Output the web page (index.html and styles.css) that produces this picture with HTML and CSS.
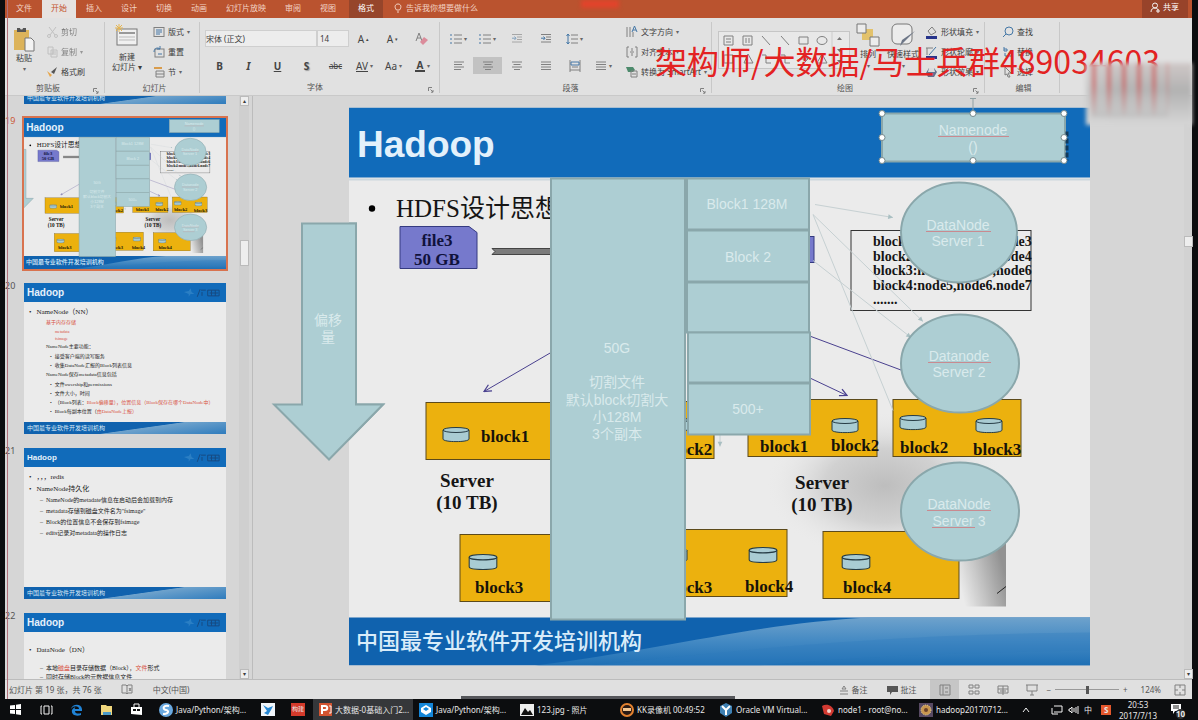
FILE: index.html
```html
<!DOCTYPE html>
<html lang="zh-CN">
<head>
<meta charset="utf-8">
<title>Hadoop - PowerPoint</title>
<link rel="stylesheet" href="styles.css">
</head>
<body>
<svg class="defs" aria-hidden="true">
  <defs>
    <linearGradient id="swoosh" x1="0" y1="0" x2="0" y2="1"><stop offset="0" stop-color="#6ea2cc"/><stop offset=".5" stop-color="#4389c3"/><stop offset="1" stop-color="#1f70b5"/></linearGradient>
    <radialGradient id="shade"><stop offset="0" stop-color="#aaaaaa"/><stop offset=".5" stop-color="#c6c6c6"/><stop offset="1" stop-color="#ebebeb" stop-opacity="0"/></radialGradient>
    <linearGradient id="curl" x1="0" y1="1" x2="1" y2=".6"><stop offset=".1" stop-color="#ebebeb"/><stop offset=".5" stop-color="#c4c4c4"/><stop offset="1" stop-color="#929292"/></linearGradient>
    <marker id="tip" viewBox="0 0 10 10" refX="9" refY="5" markerWidth="9" markerHeight="9" orient="auto"><path d="M1 1L9 5L1 9" fill="none" stroke="#4a418f" stroke-width="1.4"/></marker>
    <marker id="faint" viewBox="0 0 10 10" refX="9" refY="5" markerWidth="6" markerHeight="6" orient="auto"><path d="M1 1L9 5L1 9z" fill="#a9bfc2"/></marker>
  </defs>
  <symbol id="cyl" viewBox="0 0 28 16"><path d="M1 3.5V12.500C1 16 27 16 27 12.500V3.500" class="cyl"/><ellipse cx="14" cy="3.500" rx="13" ry="2.500" class="cyl"/></symbol>
  <symbol id="lines" viewBox="0 0 12 12"><path d="M1 2H11M1 4.500H9M1 7H11M1 9.500H8" class="ink"/></symbol>
  <symbol id="center" viewBox="0 0 12 12"><path d="M1 2H11M2.500 4.500H9.500M1 7H11M3 9.500H9" class="ink"/></symbol>
  <symbol id="just" viewBox="0 0 12 12"><path d="M1 2H11M1 4.500H11M1 7H11M1 9.500H11" class="ink"/></symbol>
  <symbol id="list" viewBox="0 0 12 12"><path d="M4 2H12M4 6H12M4 10H12" class="ink"/><path d="M0 2H2M0 6H2M0 10H2" class="blue"/></symbol>
  <symbol id="indent" viewBox="0 0 12 12"><path d="M1 1.500H11M6 4H11M6 6.500H11M1 9H11" class="ink"/><path d="M1 5.200H5M3.500 3.500L5 5.200L3.500 7" class="blue"/></symbol>
  <symbol id="spacing" viewBox="0 0 12 12"><path d="M5 2H12M5 6H12M5 10H12" class="ink"/><path d="M2 1V11M.5 3L2 1L3.500 3M.5 9L2 11L3.500 9" class="blue"/></symbol>
  <symbol id="launch" viewBox="0 0 6 6"><path d="M.5 4V.5H4M2.500 2.500L5 5M5 3V5.200H3" class="ink"/></symbol>
  <symbol id="box" viewBox="0 0 12 12"><rect x="1" y="1.500" width="10" height="9" class="ink"/><path d="M3 4H9M3 6H9M3 8H7" class="blue"/></symbol>
  <symbol id="logo" viewBox="0 0 40 10"><path d="M1 4L6 3L8 0L9 4L12 6L8 6L6 9L6 6Z" fill="#2b7fc4"/><path d="M15 9L18 1M19 2H24M20 4V8M26 2H38V8H26ZM28 5H37M30 2V8M34 2V8" stroke="#17497f" fill="none"/></symbol>

  <symbol id="slide-art" viewBox="349 107 741 558">
    <rect x="349" y="107" width="741" height="558" fill="#ebebeb"/>
    <rect x="349" y="107" width="741" height="70" fill="#116bba"/>
    <rect x="349" y="178" width="741" height="2" fill="#cdd7de"/>
    <rect x="349" y="617" width="741" height="48" fill="#1062ae"/>
    <path d="M535 665C660 650 760 622 870 617H1090V665Z" fill="url(#swoosh)"/>
    <path d="M590 665C760 648 880 634 1090 632V650C960 652 850 656 760 665Z" fill="#2f7cbd" opacity=".3"/>
    <text x="357" y="156" class="s-title">Hadoop</text>
    <text x="356" y="648" class="s-foot">中国最专业软件开发培训机构</text>
    <circle cx="372" cy="208" r="3.200"/>
    <text x="396" y="216" class="s-bullet">HDFS设计思想</text>

    <ellipse cx="885" cy="485" rx="120" ry="75" fill="url(#shade)" opacity=".7"/>
    <rect x="960" y="535" width="46" height="71" fill="url(#curl)"/>
    <path d="M997 593L1006 586" stroke="#222" stroke-width="1"/>

    <path d="M400 226H469L477 232V268H400Z" fill="#7679cc" stroke="#343a80"/>
    <text x="437" y="245" class="s-bold mid navy">file3</text>
    <text x="437" y="264" class="s-bold mid navy">50 GB</text>
    <path d="M492 248H551V254H492L495 251Z" fill="#7b7b7b" stroke="#444"/>
    <path d="M551 352L484 391" class="vec" marker-end="url(#tip)"/>
    <path d="M811 336L905 371" class="vec"/>
    <path d="M811 378L847 395" class="vec" marker-end="url(#tip)"/>
    <rect x="806" y="236" width="8" height="26" fill="#7679cc" stroke="#343a80"/>

    <g class="store">
      <rect x="426" y="402" width="130" height="57"/>
      <rect x="600" y="401" width="114" height="57"/>
      <rect x="748" y="399" width="129" height="57"/>
      <rect x="893" y="399" width="128" height="57"/>
      <rect x="460" y="534" width="96" height="67"/>
      <rect x="600" y="529" width="187" height="67"/>
      <rect x="823" y="531" width="136" height="67"/>
    </g>
    <use href="#cyl" x="442" y="426" width="28" height="16"/>
    <use href="#cyl" x="661" y="416" width="28" height="16"/>
    <use href="#cyl" x="831" y="417" width="28" height="16"/>
    <use href="#cyl" x="899" y="414" width="28" height="16"/>
    <use href="#cyl" x="975" y="417" width="28" height="16"/>
    <use href="#cyl" x="468" y="553" width="30" height="17"/>
    <use href="#cyl" x="660" y="546" width="28" height="17"/>
    <use href="#cyl" x="748" y="546" width="30" height="17"/>
    <use href="#cyl" x="841" y="553" width="30" height="17"/>
    <g class="s-bold">
      <text x="481" y="441">block1</text><text x="664" y="454">block2</text><text x="760" y="451">block1</text><text x="831" y="450">block2</text>
      <text x="900" y="452">block2</text><text x="973" y="454">block3</text><text x="475" y="592">block3</text><text x="664" y="592">block3</text>
      <text x="745" y="591">block4</text><text x="843" y="592">block4</text>
    </g>
    <g class="s-server">
      <text x="467" y="486">Server</text><text x="467" y="508">(10 TB)</text>
      <text x="822" y="488">Server</text><text x="822" y="510">(10 TB)</text>
    </g>
    <rect x="851" y="230" width="180" height="80" fill="none" stroke="#333"/>
    <g class="s-map">
      <text x="873" y="245">block1:node1,node2,node3</text><text x="873" y="260">block2:node2,node3,node4</text>
      <text x="873" y="274">block3:node4,node5,node6</text><text x="873" y="289">block4:node5,node6.node7</text><text x="873" y="303">.......</text>
    </g>
    <g class="wire">
      <path d="M815 204L893 217" marker-end="url(#faint)"/><path d="M813 214L923 321" marker-end="url(#faint)"/>
      <path d="M813 260L911 337" marker-end="url(#faint)"/><path d="M813 214L893 410"/><path d="M720 434V446" marker-end="url(#faint)"/>
    </g>
    <g class="teal">
      <rect x="551" y="178" width="134" height="441"/>
      <rect x="687" y="178" width="122" height="51"/><rect x="687" y="230" width="122" height="51"/>
      <rect x="687" y="282" width="122" height="50"/><rect x="688" y="332" width="122" height="50"/><rect x="688" y="383" width="122" height="51"/>
      <ellipse cx="959" cy="232" rx="58" ry="50"/><ellipse cx="960" cy="363" rx="59" ry="49"/><ellipse cx="960" cy="511" rx="59" ry="49"/>
      <path d="M302 223H356V404H383L329 459L274 404H302Z"/>
      <rect x="882" y="113" width="183" height="48"/>
    </g>
    <g class="s-label">
      <text x="617" y="352">50G</text><text x="617" y="386">切割文件</text><text x="617" y="404">默认block切割大</text><text x="617" y="421">小128M</text><text x="617" y="438">3个副本</text>
      <text x="747" y="208">Block1 128M</text><text x="748" y="261">Block 2</text><text x="748" y="413">500+</text>
      <text x="958" y="229">DataNode</text><text x="958" y="245">Server 1</text>
      <text x="959" y="360">Datanode</text><text x="959" y="376">Server 2</text>
      <text x="959" y="508">DataNode</text><text x="959" y="525">Server 3</text>
      <text x="973" y="134">Namenode</text><text x="973" y="151">()</text>
    </g>
    <path d="M926 231H991M928 362H991M927 510H991M932 527H975M938 136H1009" stroke="#c98a90"/>
  </symbol>
</svg>

<div class="app">
  <nav class="tabs" aria-label="功能区">
    <button class="tab">文件</button><button class="tab active">开始</button><button class="tab">插入</button><button class="tab">设计</button><button class="tab">切换</button><button class="tab">动画</button><button class="tab">幻灯片放映</button><button class="tab">审阅</button><button class="tab">视图</button><button class="tab context">格式</button>
    <button class="tell"><svg width="8" height="10" viewBox="0 0 8 10"><path d="M2.500 7C0 4 1 1 4 1S8 4 5.500 7ZM3 9H5" fill="none" stroke="#f3d3c5"/></svg>告诉我你想要做什么</button>
    <span class="glow"></span>
    <button class="share"><svg width="11" height="11" viewBox="0 0 11 11"><circle cx="5" cy="3.500" r="2.500" class="white"/><path d="M1 10C1 7 3 6 5 6S8 7 8 8M6 9H10M8 7V11" class="white"/></svg>共享</button>
  </nav>

  <div class="ribbon">
    <section class="group g-clip">
      <div class="body">
        <button class="big"><svg width="22" height="26" viewBox="0 0 22 26"><rect x="1" y="4" width="15" height="20" fill="#dcb35a"/><path d="M4 6V2H13V6Z" fill="#555"/><circle cx="8.500" cy="2" r="1.500" fill="#e1e1e1"/><path d="M12 12H18L21 15V25H12Z" fill="#f3f3f3" stroke="#777"/></svg><span>粘贴</span><i>▾</i></button>
        <div class="col">
          <button class="off"><svg width="11" height="12" viewBox="0 0 11 12"><path d="M2 1L8 9M9 1L3 9" class="gray"/><circle cx="2" cy="10" r="1.500" class="gray"/><circle cx="9" cy="10" r="1.500" class="gray"/></svg>剪切</button>
          <button class="off"><svg width="11" height="12" viewBox="0 0 11 12"><path d="M1 1H6V8H1ZM4 4H10V11H4ZM5 6H9M5 8H9" class="gray"/></svg>复制<i>▾</i></button>
          <button><svg width="11" height="12" viewBox="0 0 11 12"><path d="M0 5L5 9L3 11Z" fill="#e8a64a"/><path d="M4 6L10 1L7 8Z" fill="#555"/></svg>格式刷</button>
        </div>
      </div>
      <footer>剪贴板<svg class="launch"><use href="#launch"/></svg></footer>
    </section>
    <section class="group g-slides">
      <div class="body">
        <button class="big"><svg width="26" height="26" viewBox="0 0 26 26"><rect x="3" y="6" width="20" height="16" fill="#f0f0f0" stroke="#777"/><path d="M5 10H21" stroke="#999" stroke-width="2"/><path d="M5 14H21M5 17H21" stroke="#bbb"/><path d="M5 1V9M1 5H9M2 2L8 8M8 2L2 8" stroke="#e5b550"/></svg><span>新建<br>幻灯片 ▾</span></button>
        <div class="col">
          <button><svg width="12" height="12"><use href="#box"/></svg>版式<i>▾</i></button>
          <button><svg width="12" height="12" viewBox="0 0 12 12"><rect x="2" y="3" width="9" height="8" class="ink"/><path d="M1 6C1 2 5 1 7 3M7 0V3H4M5 8H9" class="blue"/></svg>重置</button>
          <button><svg width="12" height="12" viewBox="0 0 12 12"><path d="M1 2H9" stroke="#d99c4c" stroke-width="2"/><path d="M3 5H11V11H3ZM3 8H11" class="ink"/></svg>节<i>▾</i></button>
        </div>
      </div>
      <footer>幻灯片</footer>
    </section>
    <section class="group g-font">
      <div class="body stack">
        <div class="row fonts">
          <input class="face" aria-label="字体" value="宋体 (正文)"><input class="size" aria-label="字号" value="14">
          <button class="tool big-a">A<sup>▴</sup></button><button class="tool big-a">A<sup>▾</sup></button><button class="tool"><svg width="14" height="14" viewBox="0 0 14 14"><path d="M1 9L4 1L7 9M2 6H6" class="ink"/><path d="M5 10L9 5L13 8L8 13Z" fill="#db8c9b"/></svg></button>
        </div>
        <div class="row">
          <button class="tool"><b>B</b></button><button class="tool"><b><em>I</em></b></button><button class="tool"><b><u>U</u></b></button><button class="tool shadow"><b>S</b></button><button class="tool"><s>abc</s></button><button class="tool"><u>AV</u><i>▾</i></button><button class="tool">Aa<i>▾</i></button><button class="tool"><b class="bar">A</b><i>▾</i></button>
        </div>
      </div>
      <footer>字体<svg class="launch"><use href="#launch"/></svg></footer>
    </section>
    <section class="group g-para">
      <div class="body">
        <div class="stack">
          <div class="row"><button class="tool"><svg width="12" height="12"><use href="#list"/></svg><i>▾</i></button><button class="tool"><svg width="12" height="12"><use href="#list"/></svg><i>▾</i></button><button class="tool off"><svg width="12" height="12"><use href="#indent"/></svg></button><button class="tool"><svg width="12" height="12"><use href="#indent"/></svg></button><button class="tool"><svg width="12" height="12"><use href="#spacing"/></svg><i>▾</i></button></div>
          <div class="row"><button class="tool"><svg width="12" height="12"><use href="#lines"/></svg></button><button class="tool on"><svg width="12" height="12"><use href="#center"/></svg></button><button class="tool"><svg width="12" height="12"><use href="#center"/></svg></button><button class="tool"><svg width="12" height="12"><use href="#just"/></svg></button><button class="tool"><svg width="12" height="12" viewBox="0 0 12 12"><path d="M1 0V12M11 0V12M1 10H11M3 7H9" class="ink"/><path d="M2 2H10V5H2Z" class="blue"/></svg></button><button class="tool"><svg width="12" height="12"><use href="#just"/></svg><i>▾</i></button></div>
        </div>
        <div class="col">
          <button><svg width="12" height="12" viewBox="0 0 12 12"><path d="M1 1V11M4 1V11M7 6V11" class="ink"/><path d="M6 6L8.500 0L11 6M7 4H10" class="blue"/></svg>文字方向<i>▾</i></button>
          <button><svg width="12" height="12" viewBox="0 0 12 12"><path d="M3 1H1V11H3M9 1H11V11H9M6 2V5M6 7V10M4 6H8" class="ink"/></svg>对齐文本<i>▾</i></button>
          <button><svg width="12" height="12" viewBox="0 0 12 12"><path d="M0 1H7L9 4L7 6H2Z" fill="#4d8a6c"/><path d="M5 5H11V11H5ZM6 8H10" class="ink"/></svg>转换为 SmartArt<i>▾</i></button>
        </div>
      </div>
      <footer>段落<svg class="launch"><use href="#launch"/></svg></footer>
    </section>
    <section class="group g-draw">
      <div class="body">
        <div class="gallery">
          <svg viewBox="0 0 128 36" width="128" height="36"><path d="M5 4H14V13H5ZM7 7H12M7 10H12M24 4H33V13H24ZM27 6V11M30 6V11M43 4L51 13M62 4L70 13M80 5H89V12H80ZM5 23H14V31H5ZM25 31L29 22L34 31ZM43 23H47V31H52M62 23H66V31H71M80 27H89M86 24L89 27L86 30" class="ink"/><ellipse cx="103" cy="8.500" rx="5" ry="4" class="ink"/><path d="M98 31L103 22L108 31Z" class="ink"/><path d="M113 0V36" stroke="#ccc"/><path d="M118 8H123L120.500 5ZM118 17H123L120.500 20ZM118 28H123L120.500 31Z" fill="#777"/></svg>
        </div>
        <button class="big"><svg width="24" height="24" viewBox="0 0 24 24"><path d="M6 6H17V17H6Z" fill="#e3c26c"/><path d="M1 1H10V10H1ZM14 14H23V23H14Z" fill="#ececec" stroke="#777"/></svg><span>排列</span><i>▾</i></button>
        <button class="big"><svg width="26" height="24" viewBox="0 0 26 24"><rect x="2" y="1" width="20" height="20" rx="5" fill="#ececec" stroke="#777"/><path d="M25 8L15 18L10 23L12 17Z" fill="#6d7687"/></svg><span>快速样式</span><i>▾</i></button>
        <div class="col">
          <button><svg width="13" height="13" viewBox="0 0 13 13"><path d="M3 5L7 1L11 6L6 9Z" class="ink"/><path d="M1 10H12V13H1Z" fill="#27348b"/></svg>形状填充<i>▾</i></button>
          <button><svg width="13" height="13" viewBox="0 0 13 13"><path d="M1 2H8M2 2V9" class="ink"/><path d="M4 9L11 1" class="blue"/><path d="M1 10H12V13H1Z" fill="#27348b"/></svg>形状轮廓<i>▾</i></button>
          <button><svg width="13" height="13" viewBox="0 0 13 13"><path d="M4 2H9L12 6L9 11H3L1 7Z" fill="#62708c"/><path d="M4 2H9L10 6H3Z" fill="#ddd"/></svg>形状效果<i>▾</i></button>
        </div>
      </div>
      <footer>绘图<svg class="launch"><use href="#launch"/></svg></footer>
    </section>
    <section class="group g-edit">
      <div class="body">
        <div class="col">
          <button><svg width="12" height="12" viewBox="0 0 12 12"><circle cx="7" cy="5" r="4" class="blue"/><path d="M4 8L1 11" class="blue"/></svg>查找</button>
          <button><svg width="12" height="12" viewBox="0 0 12 12"><path d="M2 1V5H5V3H2M7 7H10V10H7ZM3 7V10H5" class="blue"/></svg>替换</button>
          <button><svg width="12" height="12" viewBox="0 0 12 12"><path d="M3 1L9 7H6L8 11L6 11L5 8L3 9Z" class="ink"/></svg>选择</button>
        </div>
      </div>
      <footer>编辑</footer>
    </section>
  </div>

  <main class="work">
    <aside class="panel">
      <ol class="thumbs">
        <li class="peek"><span class="num"></span><div class="thumb"><div class="t-foot">中国最专业软件开发培训机构</div></div></li>
        <li class="current"><span class="num">19</span><div class="thumb"><svg class="art" preserveAspectRatio="none" viewBox="0 0 741 558"><use href="#slide-art" width="741" height="558"/></svg></div></li>
        <li><span class="num">20</span><div class="thumb"><div class="t-head">Hadoop<svg class="logo"><use href="#logo"/></svg></div>
          <div class="t-body"><p class="l1">NameNode（NN）</p><p class="l2 red">基于内存存储</p><p class="l3 red tiny">metadata</p><p class="l3 red tiny">fsimage</p><p class="l2">NameNode主要功能：</p><p class="l3">接受客户端的读写服务</p><p class="l3">收集DataNode汇报的Block列表信息</p><p class="l2">NameNode保存metadata信息包括</p><p class="l3">文件owership和permissions</p><p class="l3">文件大小，时间</p><p class="l3">（Block列表：<span class="red">Block偏移量），位置信息（Block保存在哪个DataNode中）</span></p><p class="l3">Block每副本位置（<span class="red">由DataNode上报）</span></p></div>
          <div class="t-foot">中国最专业软件开发培训机构</div></div></li>
        <li><span class="num">21</span><div class="thumb"><div class="t-head small">Hadoop<svg class="logo"><use href="#logo"/></svg></div>
          <div class="t-body roomy"><p class="l1">，，，redis</p><p class="l1">NameNode持久化</p><p class="dash">NameNode的metadate信息在启动后会加载到内存</p><p class="dash">metadata存储到磁盘文件名为"fsimage"</p><p class="dash">Block的位置信息不会保存到fsimage</p><p class="dash">edits记录对metadata的操作日志</p></div>
          <div class="t-foot">中国最专业软件开发培训机构</div></div></li>
        <li><span class="num">22</span><div class="thumb"><div class="t-head">Hadoop<svg class="logo"><use href="#logo"/></svg></div>
          <div class="t-body late"><p class="l1">DataNode（DN）</p><p class="dash first">本地<span class="red">磁盘</span>目录存储数据（Block），<span class="red">文件</span>形式</p><p class="dash">同时存储Block的元数据信息文件</p></div></div></li>
      </ol>
      <div class="scroll"><span>▴</span><span class="grip"></span><span>▾</span></div>
    </aside>
    <div class="stage">
      <svg class="canvas" viewBox="253 96 931 582" role="img" aria-label="Hadoop 幻灯片">
        <use href="#slide-art" x="349" y="107" width="741" height="558"/>
        <path d="M302 223H356V404H383L329 459L274 404H302Z" class="teal"/>
        <g class="s-label"><text x="328" y="324">偏移</text><text x="328" y="341">量</text></g>
        <path d="M1067 131V160" stroke="#123a5c" stroke-width="3" stroke-dasharray="5 2"/>
        <path d="M973 98V113M970 98H976" stroke="#8fa0a4"/>
        <g class="handles"><circle cx="882" cy="113" r="3"/><circle cx="973" cy="113" r="3"/><circle cx="1064" cy="113" r="3"/><circle cx="882" cy="137" r="3"/><circle cx="1064" cy="137" r="3"/><circle cx="882" cy="160" r="3"/><circle cx="973" cy="160" r="3"/><circle cx="1064" cy="160" r="3"/></g>
      </svg>
    </div>
    <div class="scroll slim"><span></span><span class="grip"></span><span>▾</span></div>
  </main>

  <div class="status">
    <span>幻灯片 第 19 张，共 76 张</span>
    <svg width="13" height="11" viewBox="0 0 13 11"><path d="M1 1H5L6 2V10L5 9H1ZM6 2L7 1H11V9H7L6 10M8 4L10 7M10 4L8 7" class="ink"/></svg>
    <span>中文(中国)</span>
    <div class="right">
      <button><svg width="10" height="10" viewBox="0 0 10 10"><path d="M1 6H9M1 9H9M3 4L5 1L7 4Z" class="ink"/></svg>备注</button>
      <button class="notes"><svg width="11" height="10" viewBox="0 0 11 10"><path d="M0 1H11V7H5L3 10V7H0Z" fill="#555"/></svg>批注</button>
      <button class="view on"><svg width="12" height="12" viewBox="0 0 12 12"><path d="M1 1H11V11H1ZM4 1V11M6 4H9M6 8H9" class="ink"/></svg></button>
      <button class="view"><svg width="12" height="12" viewBox="0 0 12 12"><path d="M1 1H5V4H1ZM7 1H11V4H7ZM1 7H5V10H1ZM7 7H11V10H7Z" class="ink"/></svg></button>
      <button class="view"><svg width="12" height="12" viewBox="0 0 12 12"><path d="M1 2H11V9H1ZM6 2V11M1 5H11M3 7H9" class="ink"/></svg></button>
      <button class="view"><svg width="12" height="12" viewBox="0 0 12 12"><path d="M0 1H12M1 1V7H11V1M6 7V11M4 11H8" class="ink"/></svg></button>
      <span>−</span><input type="range" aria-label="缩放" min="0" max="100" value="50"><span>+</span>
      <span class="pct">124%</span>
      <svg width="12" height="12" viewBox="0 0 12 12"><path d="M1 1H11V11H1ZM6 1V4M6 8V11M1 6H4M8 6H11" class="ink"/></svg>
    </div>
  </div>
  <div class="watermark">架构师/大数据/马士兵群489034603</div>
  <div class="smear"></div>
  <div class="strip"></div>
</div>

<div class="taskbar">
  <button class="ic"><svg width="11" height="11" viewBox="0 0 11 11"><path d="M0 1.500L5 1V5H0ZM6 .8L11 0V5H6ZM0 6H5V10L0 9.500ZM6 6H11V11L6 10.200Z" fill="#fff"/></svg></button>
  <button class="ic"><svg width="13" height="10" viewBox="0 0 13 10"><path d="M4 1H9V9H4ZM2 1H1V9H2M11 1H12V9H11" class="white"/></svg></button>
  <button class="ic"><svg width="13" height="13" viewBox="0 0 13 13"><path d="M1 6C2 1 11 0 12 6V8H5C5 11 9 11 11 10V12C5 14 1 11 2 7C3 5 5 4 6 4C4 5 5 6 5 6H9C9 3 4 2 1 6Z" fill="#2083d6"/></svg></button>
  <button class="ic"><svg width="13" height="12" viewBox="0 0 13 12"><path d="M1 1H6L7 2H12V11H1Z" fill="#f0d67d"/><path d="M3 8H11V11H3Z" fill="#4b9ac8"/></svg></button>
  <button class="ic"><svg width="13" height="13" viewBox="0 0 13 13"><path d="M1 4H12V12L1 11Z" fill="#fff"/><path d="M4 4V1H9V4" class="white"/><path d="M3 6H6V8H3ZM7 6H10V8H7Z" fill="#111"/></svg></button>
  <button class="task t1"><svg width="14" height="14" viewBox="0 0 14 14"><circle cx="7" cy="7" r="7" fill="#6aa9e0"/><path d="M10 3C4 2 3 6 7 7S9 11 4 11" stroke="#fff" stroke-width="2" fill="none"/></svg>Java/Python/架构...</button>
  <button class="ic"><svg width="14" height="13" viewBox="0 0 14 13"><rect width="14" height="13" fill="#f1f6fb"/><path d="M2 2L7 5L12 3L10 7L7 12L3 10L6 8Z" fill="#2688d5"/></svg></button>
  <button class="ic"><span class="seal">构建</span></button>
  <button class="task t2 on"><svg width="13" height="13" viewBox="0 0 13 13"><rect width="13" height="13" fill="#d25431"/><path d="M3 11V3H6C9 3 9 7 6 7H4" stroke="#fff" stroke-width="2" fill="none"/><path d="M10 3H12V10H10" class="white"/></svg>大数据-0基础入门2...</button>
  <button class="task t3"><svg width="14" height="14" viewBox="0 0 14 14"><rect width="14" height="14" fill="#1486d8"/><path d="M2 5L7 2L12 5V9L7 12L2 9Z" fill="#fff"/><path d="M4 6L7 4L10 6L7 8Z" fill="#1486d8"/></svg>Java/Python/架构...</button>
  <button class="task t4"><svg width="14" height="12" viewBox="0 0 14 12"><rect width="14" height="12" fill="#eee"/><path d="M1 11L5 4L8 8L10 6L13 11Z" fill="#111"/></svg>123.jpg - 照片</button>
  <button class="task t5"><svg width="14" height="14" viewBox="0 0 14 14"><circle cx="7" cy="7" r="6" fill="#2a1a15" stroke="#e2812f" stroke-width="2"/><path d="M3 5H11V8H3Z" fill="#f3c792"/></svg>KK录像机 00:49:52</button>
  <button class="task t6"><svg width="14" height="14" viewBox="0 0 14 14"><path d="M1 3L7 0L13 3V10L7 14L1 10Z" fill="#3e80b3"/><path d="M3 3L7 7L11 3M7 7V12" stroke="#fff" stroke-width="2" fill="none"/></svg>Oracle VM Virtual...</button>
  <button class="task t7"><svg width="14" height="14" viewBox="0 0 14 14"><path d="M1 3C6 0 12 3 13 8L10 13L3 11Z" fill="#d33a32"/><circle cx="8" cy="8" r="2" fill="#f3d5cd"/></svg>node1 - root@no...</button>
  <button class="task t8"><svg width="14" height="14" viewBox="0 0 14 14"><rect width="14" height="14" fill="#584a63"/><circle cx="7" cy="7" r="5" fill="#c9974e" stroke="#e6d7a0" stroke-dasharray="1 1"/><circle cx="7" cy="7" r="2" fill="#6b432b"/></svg>hadoop20170712...</button>
  <div class="tray">
    <svg width="8" height="6" viewBox="0 0 8 6"><path d="M1 5L4 1L7 5" class="white"/></svg>
    <svg class="net" width="12" height="10" viewBox="0 0 12 10"><path d="M3 1H11V7H3M1 3V9H7" class="white"/></svg>
    <svg width="11" height="10" viewBox="0 0 11 10"><path d="M1 4H2L4 2V8L2 6H1ZM6 3V7M8 2V8M10 1V9" class="white"/></svg>
    <span>中</span><span class="sogou">S</span>
    <time>20:53<br>2017/7/13</time>
    <span class="bell"><svg width="12" height="12" viewBox="0 0 12 12"><path d="M1 1H11V8H5L3 11V8H1Z" fill="#fff"/><path d="M3 3H9M3 5H9" stroke="#222"/></svg><b>10</b></span>
  </div>
</div>
</body>
</html>
```

FILE: styles.css
```css
* { box-sizing: border-box; }
body {
  margin: 0; height: 100vh; display: flex; flex-direction: column; overflow: hidden;
  background: #0c0d0f; color: #3c3c3c;
  font: 8px/10px "Noto Sans", "Noto Sans CJK SC", sans-serif;
}
button, input { font: inherit; color: inherit; border: 0; background: none; padding: 0; margin: 0; white-space: nowrap; }
button { display: flex; align-items: center; }
i { font-style: normal; font-size: 6px; color: #666; }
svg { flex: none; }
.defs { position: absolute; width: 0; height: 0; }
.ink, .blue, .gray, .white { fill: none; stroke: #808080; }
.blue { stroke: #4477a6; }
.gray { stroke: #aaa; }
.white { stroke: #f5f5f5; }

.app { position: relative; flex: 1; min-height: 0; margin: 0 6px 0 5px; display: flex; flex-direction: column; background: #d6d6d6; }
.app::before { content: ""; position: absolute; left: 2px; top: 0; bottom: 0; width: 1px; background: #b0707a; z-index: 2; }

.tabs { display: flex; gap: 1px; height: 18px; padding-left: 2px; background: #ba532f; color: #f3d3c5; }
.tab { padding: 0 9px 2px; height: 100%; }
.tab.active { background: #e6e2e0; color: #c4532e; }
.tab.context { background: #96452b; margin-left: 3px; color: #fff; }
.tell { gap: 4px; margin-left: 10px; padding-bottom: 2px; }
.glow { width: 38px; height: 8px; margin-left: 102px; background: #e2432b; filter: blur(2px); }
.share { gap: 2px; margin-left: auto; margin-right: 4px; padding: 0 9px 4px 8px; background: #98432a; color: #fff; }

.ribbon { display: flex; height: 78px; background: #e1e1e1; border-bottom: 1px solid #c9c9c9; }
.group { display: flex; flex-direction: column; flex: none; border-right: 1px solid #c8c8c8; margin: 4px 0 2px; }
.group .body { display: flex; height: 60px; }
.group footer { position: relative; text-align: center; line-height: 12px; color: #555; }
.launch { position: absolute; right: 5px; bottom: 0; width: 6px; height: 6px; }
.g-clip { width: 100px; padding-left: 5px; }
.g-clip footer { padding-right: 18px; }
.g-slides { width: 95px; padding-left: 5px; }
.g-font { width: 240px; padding-left: 5px; }
.g-font footer { padding-right: 14px; }
.g-para { width: 272px; padding-left: 4px; }
.g-para footer { padding-right: 14px; }
.g-draw { width: 273px; padding-left: 6px; }
.g-draw footer { padding-right: 12px; }
.g-edit { width: 75px; padding-left: 17px; }
.g-edit footer { padding-right: 14px; }
.big { flex-direction: column; gap: 1px; padding-top: 4px; line-height: 10px; text-align: center; min-width: 28px; }
.g-slides .big { padding-top: 1px; min-width: 34px; gap: 3px; }
.g-clip .col { padding-left: 9px; }
.g-slides .col { padding-left: 9px; }
.g-draw .big { padding-top: 1px; margin-left: 4px; gap: 2px; }
.g-draw .big + .big { margin-left: 5px; }
.g-draw .col { padding-left: 6px; }
.col { display: grid; grid-template-rows: repeat(3, 20px); }
.col button { gap: 3px; }
.off { opacity: .6; }
.stack { display: flex; flex-direction: column; padding-top: 3px; }
.group .stack.body { flex-direction: column; }
.row { display: flex; height: 27px; align-items: center; }
.tool { width: 29px; height: 17px; justify-content: center; gap: 2px; font-size: 10px; color: #444; }
.tool.on { background: #c2c2c2; }
.tool sup { font-size: 5px; }
.tool s { font-size: 8px; }
.shadow { text-shadow: 1px 1px 1px #999; }
.bar { border-bottom: 2px solid #444; line-height: 10px; padding: 0 2px; }
.fonts input { height: 17px; background: #ededed; border: 1px solid #cfcfcf; min-width: 0; }
.fonts .face { width: 112px; }
.fonts .size { width: 32px; padding-left: 2px; }
.g-para .col { padding-left: 8px; }
.gallery { width: 132px; height: 38px; margin-top: 9px; background: #e8e8e8; border: 1px solid #c6c6c6; }

.work { display: flex; flex: 1; min-height: 0; }
.panel { display: flex; width: 248px; border-right: 1px solid #bcbcbc; padding-right: 3px; }
.thumbs { flex: 1; list-style: none; margin: 0; padding: 0 0 0 1px; overflow: hidden; display: flex; flex-direction: column; gap: 14px; }
.thumbs li { display: flex; flex: none; height: 151px; gap: 7px; }
.thumbs .peek { height: 8px; }
.peek .thumb { justify-content: flex-end; }
.num { width: 11px; flex: none; font-size: 9px; line-height: 5px; color: #555; text-indent: -1px; }
.current .num { color: #cb5a38; }
.thumb { width: 202px; display: flex; flex-direction: column; overflow: hidden; background: #ebebeb; font-family: "Liberation Serif", "Noto Sans CJK SC", serif; color: #222; }
.current .thumb { outline: 2px solid #d8734f; }
.art { width: 100%; height: 100%; }
.t-head { display: flex; align-items: center; justify-content: space-between; flex: none; height: 19px; padding: 0 5px 0 3px; background: #116bba; color: #e6f1fa; font: bold 10px "Liberation Sans", sans-serif; }
.t-head.small { font-size: 8px; }
.logo { width: 38px; height: 10px; }
.t-body { flex: 1; min-height: 0; padding: 4px 4px 0 12px; font-size: 5px; line-height: 9px; }
.t-body p { margin: 0; white-space: nowrap; }
.t-body .l1 { font-size: 7px; line-height: 12px; }
.l1::before { content: "•"; margin-left: -7px; margin-right: 5px; }
.l2 { padding-left: 10px; line-height: 10px; }
.l3 { padding-left: 19px; }
.l3::before { content: "•"; margin-left: -5px; margin-right: 3px; }
.t-body .tiny { font-size: 4px; line-height: 7px; }
.tiny::before { content: none; }
.dash { padding-left: 10px; }
.dash::before { content: "–"; margin-left: -6px; margin-right: 3px; }
.roomy { line-height: 11px; font-size: 6px; }
.late { padding-top: 12px; font-size: 6px; }
.late .first { padding-top: 8px; }
.red { color: #d8503f; }
.t-foot { flex: none; height: 12px; padding-left: 3px; color: #d7e9f7; font: 6px/12px "Noto Sans CJK SC", sans-serif; background: linear-gradient(172deg, #1062ae 55%, #6ea2cc 57%, #2f7cbd); }
.scroll { width: 10px; display: flex; flex-direction: column; align-items: center; justify-content: space-between; background: #cfcfcf; }
.scroll span { width: 9px; height: 10px; background: #eee; border: 1px solid #bbb; text-align: center; line-height: 8px; font-size: 6px; }
.scroll .grip { height: 26px; margin: 0 0 270px; }
.slim { width: 8px; background: #d2d2d2; }
.slim .grip { height: 11px; margin: 0 0 292px; }
.slim span:first-child { visibility: hidden; }
.stage { flex: 1; min-width: 0; }
.canvas { display: block; width: 100%; height: 100%; }

.s-title { font: bold 37px "Liberation Sans", sans-serif; fill: #e3f1fb; }
.s-foot { font: 500 22px "Noto Sans CJK SC", sans-serif; fill: #d9ecf9; }
.s-bullet { font: 25px "Liberation Serif", "Noto Sans CJK SC", serif; fill: #151515; }
.s-bold { font: bold 17px "Liberation Serif", serif; fill: #17130a; }
.navy { fill: #10123c; }
.mid, .s-server, .s-label { text-anchor: middle; }
.s-server { font: bold 19px "Liberation Serif", serif; fill: #151515; }
.s-map { font: bold 14px "Liberation Serif", serif; fill: #151515; }
.s-label { font: 14px "Liberation Sans", "Noto Sans CJK SC", sans-serif; fill: #d9eaec; }
.teal { fill: #adced3; stroke: #8aa7ab; stroke-width: 2; }
.store { fill: #ecb10e; stroke: #5c4a1a; }
.cyl { fill: #a9ccd3; stroke: #263c45; stroke-width: 1; }
.vec { fill: none; stroke: #4a418f; stroke-width: 1; }
.wire { fill: none; stroke: #c6d0d2; }
.handles { fill: #fff; stroke: #76898d; }

.status { display: flex; align-items: center; gap: 19px; height: 20px; padding-left: 4px; background: #e0e0e0; border-top: 1px solid #bcbcbc; color: #555; }
.right { display: flex; align-items: center; align-self: stretch; margin-left: auto; padding-right: 6px; }
.right button { gap: 2px; }
.right .notes { margin: 0 14px 0 20px; }
.right .view { width: 29px; height: 100%; justify-content: center; }
.view.on { background: #c6c6c6; }
.right input { appearance: none; width: 64px; height: 1px; margin: 0 4px; background: #999; }
.right input::-webkit-slider-thumb { appearance: none; width: 3px; height: 8px; background: #555; }
.pct { margin: 0 13px; }

.watermark { position: absolute; left: 650px; top: 42px; font: 400 32px/36px "Noto Sans CJK SC", sans-serif; color: #e32222; white-space: nowrap; }
.smear { position: absolute; right: 0; top: 63px; width: 106px; height: 62px; filter: blur(2px); background: linear-gradient(100deg, #d6d6d6aa, transparent 30%), linear-gradient(#cfc8c7, #b2b2b2 45%, #d6d6d6); }
.smear::after { content: ""; position: absolute; left: 6px; top: 0; width: 76px; height: 54px; background: linear-gradient(transparent 40%, #c2c2c2), repeating-linear-gradient(90deg, #cf454590 0 4px, transparent 4px 15px); }
.strip { position: absolute; left: 456px; bottom: 0; width: 274px; height: 3px; background: #55565a; }

.taskbar { display: flex; height: 21px; color: #e8e8e8; flex: none; }
.ic { width: 30px; flex: none; justify-content: center; }
.ic:first-child { width: 31px; }
.task { gap: 3px; flex: none; overflow: hidden; padding-left: 6px; }
.seal { background: #d43a2b; font-size: 6px; line-height: 13px; padding: 0 1px; }
.task.on { background: #35373a; }
.t1 { width: 102px; padding-left: 8px; }
.t2 { width: 100px; }
.t3 { width: 101px; }
.t4 { width: 100px; }
.t5 { width: 99px; }
.t6 { width: 102px; }
.t7 { width: 98px; }
.t8 { width: 99px; }
.tray { display: flex; align-items: center; flex: 1; min-width: 0; gap: 5px; padding-left: 10px; }
.net { margin-left: 16px; }
.tray time { margin-left: auto; text-align: center; line-height: 11px; }
.sogou { background: #e4572c; font-weight: bold; padding: 0 3px; margin-left: 4px; }
.bell { position: relative; margin: 0 16px 0 8px; }
.bell b { position: absolute; left: 6px; top: 6px; background: #333; border-radius: 5px; }
```
